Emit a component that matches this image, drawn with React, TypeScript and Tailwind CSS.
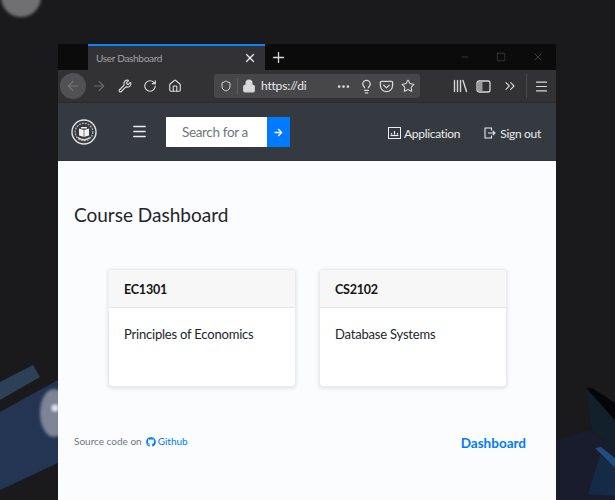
import { ChevronsRight, Home, Lightbulb, Lock, Menu, RotateCw, Shield, Star, Wrench, X, Plus, Minus, Square, ArrowLeft, ArrowRight, Ellipsis } from "lucide-react";
import { FaArrowRight, FaGithub } from "react-icons/fa";

const courses = [
  { code: "EC1301", name: "Principles of Economics" },
  { code: "CS2102", name: "Database Systems" },
];

const uiFont = "font-['Lato','Noto_Sans',sans-serif]";

function Wallpaper() {
  return (
    <svg className="absolute inset-0" width="615" height="500" viewBox="0 0 615 500">
      <defs>
        <filter id="soft"><feGaussianBlur stdDeviation="1.5" /></filter>
      </defs>
      <rect width="615" height="500" fill="#1a1a1c" />
      <circle cx="21" cy="-3" r="20" fill="#6f6f72" filter="url(#soft)" />
      <path d="M0 382 L33 365 L40 377 L0 400 Z" fill="#2c4058" />
      <path d="M0 412 L58 380 L58 463 L0 490 Z" fill="#233553" />
      <ellipse cx="54" cy="413" rx="14" ry="24" fill="#7c8496" filter="url(#soft)" />
      <circle cx="55" cy="408" r="3.5" fill="#e6e8ee" filter="url(#soft)" />
      <path d="M556 440 L590 430 L615 450 L615 500 L556 500 Z" fill="#181c2c" />
      <path d="M586 388 L615 412 L615 450 L592 430 Z" fill="#11202a" />
      <path d="M586 388 L592 388 L615 403 L615 420 Z" fill="#060608" />
      <path d="M600 455 L615 468 L615 496 L588 494 Z" fill="#142a45" />
      <path d="M595 448 L601 447 L615 458 L615 468 Z" fill="#1f4d80" />
    </svg>
  );
}

function LogoSeal() {
  return (
    <svg width="26" height="26" viewBox="0 0 26 26" fill="none">
      <circle cx="13" cy="13" r="12" stroke="#e4e4e4" strokeWidth="1.4" />
      <circle cx="13" cy="13" r="8.8" stroke="#a8a8a8" strokeWidth="1.4" strokeDasharray="2 1" />
      <path d="M8 9.5 L13 11 L18 9.5 V16.5 L13 18 L8 16.5 Z" fill="#f0f0f0" />
      <path d="M10 8 H16 V9.5 H10 Z" fill="#f0f0f0" />
      <path d="M13 11 V18" stroke="#4a4f55" strokeWidth="0.7" />
      <path d="M7 18.5 Q13 23 19 18.5" stroke="#dddddd" strokeWidth="1.3" />
    </svg>
  );
}

function PocketIcon() {
  return (
    <svg width="15" height="15" viewBox="0 0 16 16" fill="none" stroke="#d6d6d7" strokeWidth="1.4" strokeLinecap="round" strokeLinejoin="round">
      <path d="M2.5 2.5 H13.5 A1 1 0 0 1 14.5 3.5 V7 A6.5 6.5 0 0 1 1.5 7 V3.5 A1 1 0 0 1 2.5 2.5 Z" />
      <path d="M5 6.5 L8 9.5 L11 6.5" />
    </svg>
  );
}

function LibraryIcon() {
  return (
    <svg width="15" height="14" viewBox="0 0 15 14" fill="none" stroke="#d6d6d7" strokeWidth="1.4" strokeLinecap="round">
      <path d="M1.5 1.5 V12.5 M4.5 1.5 V12.5 M7.5 1.5 V12.5 M10 1.5 L13.5 12.5" />
    </svg>
  );
}

function SidebarIcon() {
  return (
    <svg width="15" height="13" viewBox="0 0 15 13" fill="none">
      <rect x="1" y="1" width="13" height="11" rx="2" stroke="#d6d6d7" strokeWidth="1.3" />
      <rect x="2" y="2" width="4.5" height="9" fill="#9a9a9c" />
    </svg>
  );
}

function ChartBoxIcon() {
  return (
    <svg width="13" height="12" viewBox="0 0 13 12" fill="none" stroke="#ececec">
      <rect x="0.5" y="0.5" width="12" height="11" strokeWidth="1" />
      <path d="M2.5 8.5 H10.5" strokeWidth="1.2" />
      <path d="M3.5 7.5 V6 M6.5 7.5 V4 M9.5 7.5 V6" strokeWidth="1.2" />
    </svg>
  );
}

function SignOutIcon() {
  return (
    <svg width="12" height="12" viewBox="0 0 12 12" fill="none" stroke="#ececec" strokeWidth="1.1">
      <path d="M7.5 3.5 V1 H1 V11 H7.5 V8.5" />
      <path d="M4 6 H11 M8.8 3.8 L11 6 L8.8 8.2" />
    </svg>
  );
}

function CourseCard({ code, name }: { code: string; name: string }) {
  return (
    <div className="w-[188px] h-[118px] bg-white rounded border border-[#ececec] shadow-[0_1px_4px_rgba(0,0,0,0.12)] overflow-hidden">
      <div className="h-[38px] pt-[4px] px-[15px] flex items-center bg-[#f7f7f7] border-b border-[#e6e6e6] text-[12.5px] tracking-[-0.2px] font-bold text-[#141414]">
        {code}
      </div>
      <div className="px-[15px] pt-[17px] text-[13px] tracking-[-0.2px] leading-[18px] text-[#212529] whitespace-nowrap">{name}</div>
    </div>
  );
}

export default function App() {
  return (
    <div className={`relative w-[615px] h-[500px] overflow-hidden ${uiFont}`}>
      <Wallpaper />
      <div className="absolute left-[58px] top-[44px] w-[498px] h-[456px] flex flex-col">
        {/* tab strip */}
        <div className="h-[26px] bg-[#0b0b0c] flex items-stretch text-[#d9d9da]">
          <div className="ml-[30px] w-[177px] bg-[#323234] border-t-2 border-[#0a84ff] flex items-center pl-2 pr-2 justify-between">
            <span className="text-[10px] tracking-[-0.3px] text-[#a3a3a5]">User Dashboard</span>
            <X size={14} strokeWidth={2.2} color="#f2f2f2" />
          </div>
          <div className="w-[26px] flex items-center justify-center">
            <Plus size={17} strokeWidth={1.8} />
          </div>
          <div className="ml-auto flex items-center gap-[26px] pr-[12px] text-[#5f5f60]">
            <Minus size={10} strokeWidth={1.2} />
            <Square size={10} strokeWidth={1.2} />
            <X size={12} strokeWidth={1.2} />
          </div>
        </div>

        {/* browser toolbar */}
        <div className="h-[33px] bg-[#323234] flex items-center border-b border-[#29292a] text-[#d9d9da]">
          <div className="ml-[2px] w-[26px] h-[26px] rounded-full bg-[#515153] flex items-center justify-center shrink-0">
            <ArrowLeft size={16} color="#77777a" strokeWidth={1.6} />
          </div>
          <ArrowRight size={16} color="#6c6c6e" strokeWidth={1.6} className="ml-[5px]" />
          <Wrench size={14} className="ml-[11px]" strokeWidth={2} />
          <RotateCw size={14} className="ml-[11px]" strokeWidth={2} />
          <Home size={14} className="ml-[11px]" strokeWidth={2} />
          <div className="ml-[32px] w-[206px] h-[24px] rounded-[3px] bg-[#474749] flex items-center pl-[6px] pr-[4px] shrink-0">
            <Shield size={12} strokeWidth={2} />
            <div className="ml-[5px] w-px h-4 bg-[#5d5d5f]" />
            <Lock size={14} className="ml-[4px]" fill="#d9d9da" />
            <span className="ml-[5px] w-[54px] whitespace-nowrap text-[12px] tracking-[-0.2px] text-[#ececec]">https://di</span>
            <Ellipsis size={15} className="ml-[21px]" strokeWidth={2.4} />
            <Lightbulb size={15} className="ml-[8px]" />
            <span className="ml-[5px] flex"><PocketIcon /></span>
            <Star size={14} className="ml-[7px]" strokeWidth={1.8} />
          </div>
          <span className="ml-[33px] flex"><LibraryIcon /></span>
          <span className="ml-[8px] flex"><SidebarIcon /></span>
          <ChevronsRight size={16} className="ml-[11px]" strokeWidth={1.6} />
          <div className="ml-[8px] w-px h-6 bg-[#4b4b4d]" />
          <Menu size={15} className="ml-[7px]" strokeWidth={1.8} />
        </div>

        {/* app nav */}
        <div className="h-[58px] bg-[#343a40] flex items-center text-[#ececec] border-b border-[#2d3237]">
          <div className="ml-[13px] flex"><LogoSeal /></div>
          <Menu size={17} strokeWidth={2} className="ml-[34px]" />
          <div className="ml-[18px] flex h-[30px] mt-[1px]">
            <div className="w-[101px] bg-white pl-4 flex items-center text-[13.5px] tracking-[-0.35px] text-[#6c757d] overflow-hidden whitespace-nowrap">
              Search for a
            </div>
            <div className="w-[23px] bg-[#007bff] flex items-center justify-center">
              <FaArrowRight size={9} color="#ffffff" />
            </div>
          </div>
          <div className="ml-[98px] pt-[2px] flex items-center gap-[3px] text-[12px] tracking-[-0.3px]">
            <ChartBoxIcon />
            <span className="pt-[3px]">Application</span>
          </div>
          <div className="ml-[24px] pt-[2px] flex items-center gap-[4px] text-[12px] tracking-[-0.3px]">
            <SignOutIcon />
            <span className="pt-[3px]">Sign out</span>
          </div>
        </div>

        {/* page content */}
        <div className="flex-1 bg-[#fbfcfe] pl-4 relative">
          <h1 className="mt-[41px] text-[19px] leading-[26px] text-[#212529]">Course Dashboard</h1>
          <div className="mt-[41px] ml-[34px] flex gap-[23px]">
            {courses.map((c) => (
              <CourseCard key={c.code} code={c.code} name={c.name} />
            ))}
          </div>
          <div className="mt-[47px] flex items-start justify-between pr-[30px]">
            <div className="flex items-center text-[10px] text-[#6c757d]">
              Source code on
              <FaGithub size={10} color="#007bff" className="ml-[4px] mr-[2px]" />
              <span className="text-[#007bff]">Github</span>
            </div>
            <div className="-mt-px text-[13.5px] font-bold text-[#007bff]">Dashboard</div>
          </div>
        </div>
      </div>
    </div>
  );
}
